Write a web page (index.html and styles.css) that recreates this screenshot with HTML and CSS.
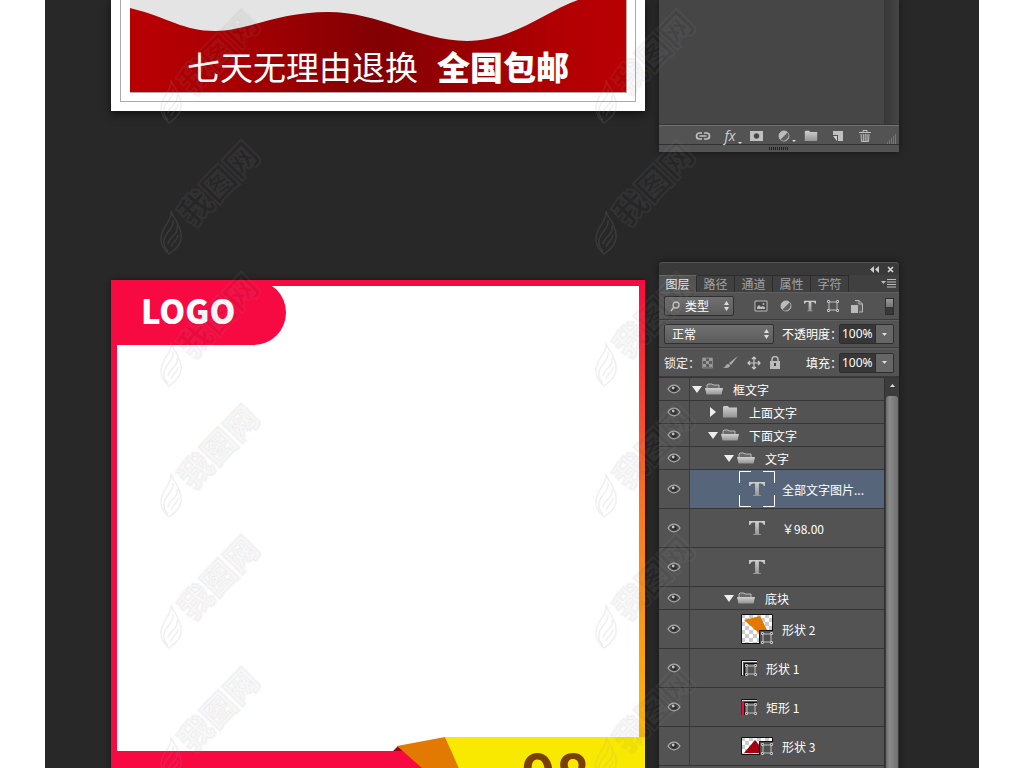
FILE: index.html
```html
<!DOCTYPE html>
<html lang="zh-CN">
<head>
<meta charset="utf-8">
<meta name="viewport" content="width=device-width, initial-scale=1">
<title>LOGO 主图模板</title>
<link rel="stylesheet" href="styles.css">
</head>
<body>
<svg class="defs" aria-hidden="true">
  <defs>
    <linearGradient id="metal" x1="0" y1="0" x2="0" y2="1"><stop offset="0" stop-color="#d0d0d0"/><stop offset="1" stop-color="#959595"/></linearGradient>
    <linearGradient id="red" x1="0" x2="1" y1="0" y2="0"><stop offset="0" stop-color="#b90003"/><stop offset=".2" stop-color="#a90003"/><stop offset=".5" stop-color="#820003"/><stop offset=".85" stop-color="#b00003"/><stop offset="1" stop-color="#b90003"/></linearGradient>
    <pattern id="checks" width="8" height="8" patternUnits="userSpaceOnUse"><rect width="8" height="8" fill="#fff"/><path d="M0 0h4v4H0zM4 4h4v4H4z" fill="#ccc"/></pattern>
    <symbol id="eye" viewBox="0 0 14 10"><path d="M1 5Q3.500 1.200 7 1.200T13 5Q10.500 8.800 7 8.800T1 5z" fill="#474747" stroke="#aaa" stroke-width="1.300"/><circle cx="7" cy="4.800" r="2.600" fill="#2c2c2c"/><circle cx="6.200" cy="4" r="1.400" fill="#c4c4c4"/></symbol>
    <symbol id="open" viewBox="0 0 18 12"><path d="M2 6V2l1-1h4l1 1h6v4" fill="#6a6a6a" stroke="#bbb"/><path d="M0 5h18l-1.500 6.500h-15z" fill="url(#metal)"/></symbol>
    <symbol id="shut" viewBox="0 0 18 12"><path d="M2 11.500V1l1-1h4l1 1.500h8v10z" fill="url(#metal)"/></symbol>
    <symbol id="down" viewBox="0 0 10 8"><path d="M0 1h10L5 8z" fill="#eee"/></symbol>
    <symbol id="right" viewBox="0 0 10 10"><path d="M2 0v10l6-5z" fill="#eee"/></symbol>
    <symbol id="type" viewBox="0 0 16 16"><path d="M0 1h16v4h-1.200Q14.200 2.800 12 2.600H9.900v10.600q0 1 2.100 1.100V15H4v-.7q2.100-.1 2.100-1.100V2.600H4Q1.800 2.800 1.200 5H0z" fill="url(#metal)"/></symbol>
    <symbol id="box" viewBox="0 0 12 12"><path d="M2 2h8v8H2z" fill="none" stroke="#c0c0c0"/><path d="M.5.5h2v2h-2zM9.500.5h2v2h-2zM.5 9.500h2v2h-2zM9.500 9.500h2v2h-2z" fill="#505050" stroke="#c0c0c0"/></symbol>
    <symbol id="half" viewBox="0 0 12 12"><circle cx="6" cy="6" r="5" fill="#bcbcbc" stroke="#bcbcbc"/><path d="M9.500 2.500A5 5 0 0 1 2.500 9.500z" fill="#606060"/></symbol>
    <symbol id="mark" viewBox="0 0 108 118">
      <g fill="none" stroke="#999" stroke-opacity=".16" stroke-width="1.500">
        <path d="M12 73c1 10-6 12-9 22-3 9 0 15 7 21 9-6 13-12 12-19 0-7-3-8-4-13-2-4-5-6-6-11z"/>
        <path d="M14 82c2 8-8 12-9 20-1 5 1 8 4 11M18 88c2 9-8 10-9 18M19 97c0 5-5 6-7 12"/>
      </g>
      <text class="mark-text" transform="translate(34 90) rotate(-46)">我图网</text>
    </symbol>
  </defs>
</svg>

<main class="stage">
  <section class="posters">
    <article class="poster">
      <div class="poster-frame">
        <div class="poster-art">
          <svg class="fill-art" viewBox="0 0 496 92" preserveAspectRatio="none" aria-hidden="true"><path d="M0 8C40 18 53 31 85 31S147 12 198 12S287 40 337 41C383 41 412 13 448 0H496V92H0z" fill="url(#red)"/></svg>
          <p class="promise">七天无理由退换<strong>全国包邮</strong></p>
        </div>
      </div>
    </article>
    <article class="card">
      <div class="card-space"><h1 class="logo">LOGO</h1></div>
      <div class="banner">
        <svg class="fill-art" viewBox="0 0 534 77" preserveAspectRatio="none" aria-hidden="true"><path d="M6 0h340v14H6z" fill="#fff"/><path d="M334 0h200v77H366z" fill="#f9e900"/><path d="M0 14h286l82 63H0z" fill="#f70941"/><path d="M282 14l5-5 8 5z" fill="#a3001c"/><path d="M286 9l48-9 34 77h-5z" fill="#e27900"/></svg>
        <strong class="price">98</strong>
      </div>
    </article>
  </section>

  <aside class="panels">
    <section class="panel panel-first">
      <div class="empty-list"><div class="empty-track"></div></div>
      <div class="tools">
        <button aria-label="链接图层"><svg width="16" height="12"><path d="M7 3H4.500a3 3 0 0 0 0 6H7M9 3h2.500a3 3 0 0 1 0 6H9M4.500 6h7" fill="none" stroke="#c0c0c0" stroke-width="1.700"/></svg></button>
        <button class="fx" aria-label="图层样式">fx</button>
        <button aria-label="添加蒙版"><svg width="16" height="12"><path d="M1 1h13v10H1z" fill="#c0c0c0"/><circle cx="7.500" cy="6" r="2.700" fill="#484848"/></svg></button>
        <button class="has-menu" aria-label="调整图层"><svg width="12" height="12"><use href="#half"/></svg></button>
        <button aria-label="新建组"><svg width="16" height="12"><use href="#shut"/></svg></button>
        <button aria-label="新建图层"><svg width="14" height="12"><path d="M2 1h10v10H7V5H2z" fill="#c0c0c0"/><path d="M2 6h4v5z" fill="#d0d0d0"/></svg></button>
        <button aria-label="删除图层"><svg width="14" height="14"><path d="M1 3.500h12M5 3V1.500h4V3M3 5l.5 7.500h7L11 5M5.300 5v7M7.200 5v7M9 5v7" fill="none" stroke="#c0c0c0"/></svg></button>
        <svg class="grip" width="10" height="10"><path d="M8 1h1M6 3h3M4 5h5M2 7h7M0 9h9" stroke="#999" stroke-dasharray="1 1"/></svg>
      </div>
      <div class="resize"><i></i></div>
    </section>

    <section class="panel">
      <div class="titlebar">
        <button aria-label="折叠"><svg width="9" height="7"><path d="M4 0v7L0 3.500zM9 0v7L5 3.500z" fill="#ccc"/></svg></button>
        <button aria-label="关闭"><svg width="7" height="7"><path d="M1 1l5 5M6 1L1 6" stroke="#ddd" stroke-width="1.500"/></svg></button>
      </div>
      <nav class="tabs">
        <button class="tab active">图层</button><button class="tab">路径</button><button class="tab">通道</button><button class="tab">属性</button><button class="tab">字符</button>
        <button class="panel-menu" aria-label="面板菜单"><svg width="15" height="9"><path d="M0 2h5L2.500 5z" fill="#bbb"/><path d="M6 .5h9M6 3h9M6 5.500h9M6 8h9" stroke="#bbb"/></svg></button>
      </nav>
      <div class="bar filters">
        <div class="pick kind"><svg class="lens" width="10" height="11"><circle cx="6" cy="4" r="3" fill="none" stroke="#ccc" stroke-width="1.300"/><path d="M4 6L1 10" stroke="#ccc" stroke-width="1.300"/></svg><select aria-label="过滤类型"><option>类型</option></select><svg class="arrows" width="5" height="10"><path d="M0 4h5L2.500 0zM0 6h5l-2.500 4z" fill="#ddd"/></svg></div>
        <div class="filter-icons">
          <button aria-label="像素图层"><svg width="14" height="12"><path d="M1 1h12v10H1z" fill="#444" stroke="#bbb"/><path d="M3 9V7l2-2 2 2 1-1 3 1v2z" fill="#bbb"/><circle cx="9.500" cy="4" r="1" fill="#bbb"/></svg></button>
          <button aria-label="调整图层"><svg width="12" height="12"><use href="#half"/></svg></button>
          <button aria-label="文字图层"><svg width="12" height="12"><use href="#type"/></svg></button>
          <button aria-label="形状图层"><svg width="12" height="12"><use href="#box"/></svg></button>
          <button aria-label="智能对象"><svg width="12" height="13"><path d="M4 .5h4l3.500 3.500v8H8M8 .5V4h3.500" fill="#606060" stroke="#bbb"/><path d="M0 5h7v8H0z" fill="#bbb"/></svg></button>
        </div>
        <button class="switch" aria-label="过滤开关"></button>
      </div>
      <div class="bar">
        <div class="pick blend"><select aria-label="混合模式"><option>正常</option></select><svg class="arrows" width="5" height="10"><path d="M0 4h5L2.500 0zM0 6h5l-2.500 4z" fill="#ddd"/></svg></div>
        <label class="push" for="opacity">不透明度：</label>
        <span class="number"><input id="opacity" value="100%"><button aria-label="不透明度滑块"><svg width="5" height="3"><path d="M0 0h5L2.500 3z" fill="#ddd"/></svg></button></span>
      </div>
      <div class="bar locks">
        <span>锁定：</span>
        <div class="lock-icons">
          <button aria-label="锁定透明像素"><svg width="11" height="12"><path d="M.5 1h10v10H.5z" fill="#5d5d5d" stroke="#888"/><path d="M1 1h3v3H1zM7 1h3v3H7zM4 4h3v3H4zM1 7h3v3H1zM7 7h3v3H7z" fill="#999"/></svg></button>
          <button aria-label="锁定图像像素"><svg width="16" height="13"><path d="M16 0l-7 9-2-2z" fill="#aaa"/><path d="M0 12q3 0 4-3 2-2 4 0 0 3-4 3z" fill="#aaa"/></svg></button>
          <button aria-label="锁定位置"><svg width="14" height="14"><path d="M7 1v12M1 7h12M5 3l2-2 2 2M5 11l2 2 2-2M3 5L1 7l2 2M11 5l2 2-2 2" fill="none" stroke="#ccc" stroke-width="1.200"/></svg></button>
          <button aria-label="锁定全部"><svg width="10" height="13"><path d="M0 5h10v8H0z" fill="#bbb"/><path d="M2 6V3.500a3 3 0 0 1 6 0V6" fill="none" stroke="#bbb" stroke-width="1.500"/><path d="M5 7v3" stroke="#444" stroke-width="2"/></svg></button>
        </div>
        <label class="push" for="fill">填充：</label>
        <span class="number"><input id="fill" value="100%"><button aria-label="填充滑块"><svg width="5" height="3"><path d="M0 0h5L2.500 3z" fill="#ddd"/></svg></button></span>
      </div>
      <div class="list">
        <ul class="layers">
          <li class="layer"><button class="eye" aria-label="可见"><svg width="14" height="10"><use href="#eye"/></svg></button><div class="group"><button aria-label="折叠组"><svg width="10" height="8"><use href="#down"/></svg></button><svg class="folder" width="18" height="12"><use href="#open"/></svg><span>框文字</span></div></li>
          <li class="layer"><button class="eye" aria-label="可见"><svg width="14" height="10"><use href="#eye"/></svg></button><div class="group level-1"><button aria-label="展开组"><svg width="10" height="10"><use href="#right"/></svg></button><svg class="folder" width="18" height="12"><use href="#shut"/></svg><span>上面文字</span></div></li>
          <li class="layer"><button class="eye" aria-label="可见"><svg width="14" height="10"><use href="#eye"/></svg></button><div class="group level-1"><button aria-label="折叠组"><svg width="10" height="8"><use href="#down"/></svg></button><svg class="folder" width="18" height="12"><use href="#open"/></svg><span>下面文字</span></div></li>
          <li class="layer"><button class="eye" aria-label="可见"><svg width="14" height="10"><use href="#eye"/></svg></button><div class="group level-2"><button aria-label="折叠组"><svg width="10" height="8"><use href="#down"/></svg></button><svg class="folder" width="18" height="12"><use href="#open"/></svg><span>文字</span></div></li>
          <li class="layer tall selected"><button class="eye" aria-label="可见"><svg width="14" height="10"><use href="#eye"/></svg></button><div class="item text"><svg width="36" height="36"><path d="M.5 12V.5H12M24 .5h11.500V12M35.500 24v11.500H24M12 35.500H.5V24" fill="none" stroke="#fff"/><use href="#type" x="10" y="10" width="16" height="16"/></svg><span>全部文字图片...</span></div></li>
          <li class="layer tall"><button class="eye" aria-label="可见"><svg width="14" height="10"><use href="#eye"/></svg></button><div class="item text"><svg width="36" height="36"><use href="#type" x="10" y="10" width="16" height="16"/></svg><span>￥98.00</span></div></li>
          <li class="layer tall"><button class="eye" aria-label="可见"><svg width="14" height="10"><use href="#eye"/></svg></button><div class="item text"><svg width="36" height="36"><use href="#type" x="10" y="10" width="16" height="16"/></svg></div></li>
          <li class="layer"><button class="eye" aria-label="可见"><svg width="14" height="10"><use href="#eye"/></svg></button><div class="group level-2"><button aria-label="折叠组"><svg width="10" height="8"><use href="#down"/></svg></button><svg class="folder" width="18" height="12"><use href="#open"/></svg><span>底块</span></div></li>
          <li class="layer tall"><button class="eye" aria-label="可见"><svg width="14" height="10"><use href="#eye"/></svg></button><div class="item"><svg width="32" height="30"><path d="M.5.5h31v29H.5z" fill="url(#checks)" stroke="#111"/><path d="M3 6l16-4 9 18h-9z" fill="#e27900"/><path d="M18 16h14v14H18z" fill="#505050"/><path d="M18.500 30V16.500H32" fill="none" stroke="#111"/><use href="#box" x="20" y="18" width="12" height="12"/></svg><span>形状 2</span></div></li>
          <li class="layer tall"><button class="eye" aria-label="可见"><svg width="14" height="10"><use href="#eye"/></svg></button><div class="item"><svg width="16" height="16"><path d="M.5 16V.5H16M3.500 16V3.500H16" fill="none" stroke="#111"/><path d="M1 1.500h15" stroke="#fff39a"/><path d="M1.500 2v13" stroke="#eee"/><use href="#box" x="4" y="4" width="12" height="12"/></svg><span>形状 1</span></div></li>
          <li class="layer tall"><button class="eye" aria-label="可见"><svg width="14" height="10"><use href="#eye"/></svg></button><div class="item"><svg width="16" height="16"><path d="M.5 16V.5H16M3.500 16V3.500H16" fill="none" stroke="#111"/><path d="M1 1.500h15" stroke="#ddd"/><path d="M1.500 2v14" stroke="#f70941" stroke-width="2"/><use href="#box" x="4" y="4" width="12" height="12"/></svg><span>矩形 1</span></div></li>
          <li class="layer tall"><button class="eye" aria-label="可见"><svg width="14" height="10"><use href="#eye"/></svg></button><div class="item"><svg width="32" height="18"><path d="M.5.5h31v17H.5z" fill="url(#checks)" stroke="#111"/><path d="M3 16L14 3l5 6v7z" fill="#a50012"/><path d="M18 4h14v14H18z" fill="#505050"/><path d="M18.500 18V4.500H32" fill="none" stroke="#111"/><use href="#box" x="20" y="6" width="12" height="12"/></svg><span>形状 3</span></div></li>
          <li class="layer tall"></li>
        </ul>
        <div class="scroll"><svg width="13" height="18"><path d="M4 9h5L6.500 6z" fill="#ddd"/></svg><div class="thumb"></div></div>
      </div>
    </section>
  </aside>

  <div class="marks" aria-hidden="true">
    <svg><use href="#mark"/></svg><svg><use href="#mark"/></svg>
    <svg><use href="#mark"/></svg><svg><use href="#mark"/></svg>
    <svg><use href="#mark"/></svg><svg><use href="#mark"/></svg>
    <svg><use href="#mark"/></svg><svg><use href="#mark"/></svg>
    <svg><use href="#mark"/></svg><svg><use href="#mark"/></svg>
    <svg><use href="#mark"/></svg><svg><use href="#mark"/></svg>
  </div>
</main>
</body>
</html>
```
FILE: styles.css
```css
* { box-sizing: border-box; }
body { margin: 0; background: #fff; font-family: "Noto Sans CJK SC", sans-serif; }
button { margin: 0; padding: 0; border: 0; background: none; color: inherit; font: inherit; display: flex; align-items: center; justify-content: center; }
svg { display: block; flex: none; }
p, h1, ul { margin: 0; padding: 0; }
.defs { position: absolute; width: 0; height: 0; }

.stage { position: relative; display: flex; gap: 14px; height: 100vh; margin: 0 45px; padding: 0 80px 0 66px; overflow: hidden; background: #282828; }
.posters { flex: 1; min-width: 0; display: flex; flex-direction: column; gap: 169px; }
.fill-art { position: absolute; inset: 0; width: 100%; height: 100%; }

.poster { padding: 0 9px 9px; background: #fff; box-shadow: 0 3px 8px #111; }
.poster-frame { padding: 0 8px 8px 9px; border: solid #aaa; border-width: 0 1px 1px; }
.poster-art { position: relative; height: 93px; background: #e4e4e4; border: solid #b9a9a9; border-width: 0 1px 1px 0; }
.promise { position: relative; padding: 42px 56px 0 57px; display: flex; gap: 19px; white-space: nowrap; color: #fff; font-size: 33px; font-weight: 400; line-height: 48px; }
.promise strong { font-weight: 900; }

.card { background: linear-gradient(#f70941, #fa7a20 45%, #fcc000 90%, #f9e900) right / 6px 100% no-repeat #f70941; box-shadow: 0 0 5px #151515; }
.card-space { height: 457px; background: linear-gradient(#fff, #fff) 6px 6px / calc(100% - 12px) 100% no-repeat; }
.logo { width: 175px; height: 65px; padding-left: 30px; background: #f70941; border-radius: 0 33px 33px 0; color: #fff; font-size: 33px; font-weight: 900; line-height: 61px; }
.banner { position: relative; display: flex; justify-content: flex-end; height: 77px; padding-right: 55px; }
.price { position: relative; color: #7b3f00; font-size: 58px; line-height: 70px; }

.panels { flex: none; width: 240px; display: flex; flex-direction: column; gap: 110px; }
.panel { background: #535353; color: #f2f2f2; font-size: 12px; line-height: 18px; box-shadow: 0 0 6px #161616; }
.empty-list { display: flex; justify-content: flex-end; height: 125px; background: #464646; border-bottom: 1px solid #363636; }
.empty-track { width: 15px; background: linear-gradient(90deg, #373737, #454545); }
.tools { display: flex; align-items: center; gap: 11px; height: 19px; padding: 2px 2px 0 36px; border-top: 1px solid #707070; }
.tools button { width: 16px; position: relative; }
.tools .fx { font: italic 400 14px/16px "Open Sans", sans-serif; color: #d0d0d0; }
.fx::after, .has-menu::after { content: ""; position: absolute; right: -4px; bottom: -2px; border: 2px solid transparent; border-top-color: #ddd; }
.grip { align-self: flex-end; margin-left: auto; }
.resize { display: flex; justify-content: center; align-items: center; height: 8px; border-top: 1px solid #303030; }
.resize i { width: 20px; height: 3px; background: repeating-linear-gradient(90deg, #222 0 1px, transparent 1px 2px); }

.titlebar { display: flex; align-items: center; justify-content: flex-end; gap: 8px; height: 13px; padding-right: 5px; background: #3a3a3a; border-top: 1px solid #555; }
.panel:last-child { border-radius: 4px 4px 0 0; }
.titlebar { border-radius: 4px 4px 0 0; }
.tabs { display: flex; height: 17px; background: #404040; }
.tab { width: 38px; border-right: 1px solid #2c2c2c; border-top: 1px solid #2c2c2c; color: #a2a2a2; line-height: 16px; }
.tab.active { background: #535353; color: #eee; border-top-color: #666; }
.panel-menu { margin-left: auto; margin-right: 3px; }
.bar { display: flex; align-items: center; height: 28px; padding: 0 5px; border-bottom: 1px solid #3a3a3a; border-top: 1px solid #5e5e5e; }
.pick { display: flex; align-items: center; height: 20px; padding: 0 4px 0 7px; background: linear-gradient(#707070, #5c5c5c); border: 1px solid #303030; border-radius: 2px; }
.pick select { flex: 1; min-width: 0; height: 18px; padding: 0; appearance: none; border: 0; background: none; color: #fff; font: inherit; }
.kind { width: 70px; gap: 5px; padding-left: 5px; }
.blend { width: 110px; }
.filter-icons { display: flex; align-items: center; justify-content: space-between; width: 109px; margin-left: 20px; }
.switch { width: 9px; height: 17px; margin-left: auto; border: 1px solid #2d2d2d; background: linear-gradient(#999, #777 50%, #383838 50%); }
.push { margin-left: auto; margin-right: -3px; color: #fff; }
.number { display: flex; width: 55px; height: 20px; border: 1px solid #2d2d2d; border-radius: 2px; }
.number input { width: 35px; padding: 0 2px; border: 0; background: #373737; color: #fff; font: 12px/18px "Noto Sans", sans-serif; }
.number button { flex: 1; background: #666; border-left: 1px solid #2d2d2d; }
.locks { height: 29px; }
.lock-icons { display: flex; align-items: center; justify-content: space-between; width: 78px; margin-left: 2px; }

.list { display: flex; border-top: 1px solid #363636; }
.layers { flex: 1; min-width: 0; list-style: none; }
.layer { display: flex; height: 23px; border-bottom: 1px solid #363636; white-space: nowrap; }
.layer.tall { height: 39px; }
.eye { width: 31px; border-right: 1px solid #3b3b3b; }
.group, .item { flex: 1; display: flex; align-items: center; color: #fff; }
.group span, .item span { padding-top: 2px; }
.group { padding-left: 2px; }
.group.level-1 { padding-left: 18px; }
.group.level-2 { padding-left: 34px; }
.group button { width: 10px; }
.folder { margin: 0 10px 0 3px; }
.item { gap: 9px; padding-left: 51px; }
.item.text { gap: 7px; padding-left: 49px; }
.selected .item { background: #56657a; }
.scroll { width: 15px; padding: 0 1px; background: #3c3c3c; border-left: 1px solid #303030; }
.thumb { height: 100%; background: linear-gradient(90deg, #6a6a6a, #8b8b8b 30%, #707070); border-radius: 3px 3px 0 0; }

.marks { position: absolute; top: 7px; left: 114px; display: grid; grid-template-columns: 435px 108px; grid-template-rows: repeat(6, 1fr); height: 788px; pointer-events: none; }
.marks svg { width: 108px; height: 118px; }
.mark-text { font-size: 33px; font-weight: 900; fill: #000; fill-opacity: .03; stroke: #999; stroke-opacity: .11; stroke-width: 2; paint-order: stroke; }
```
